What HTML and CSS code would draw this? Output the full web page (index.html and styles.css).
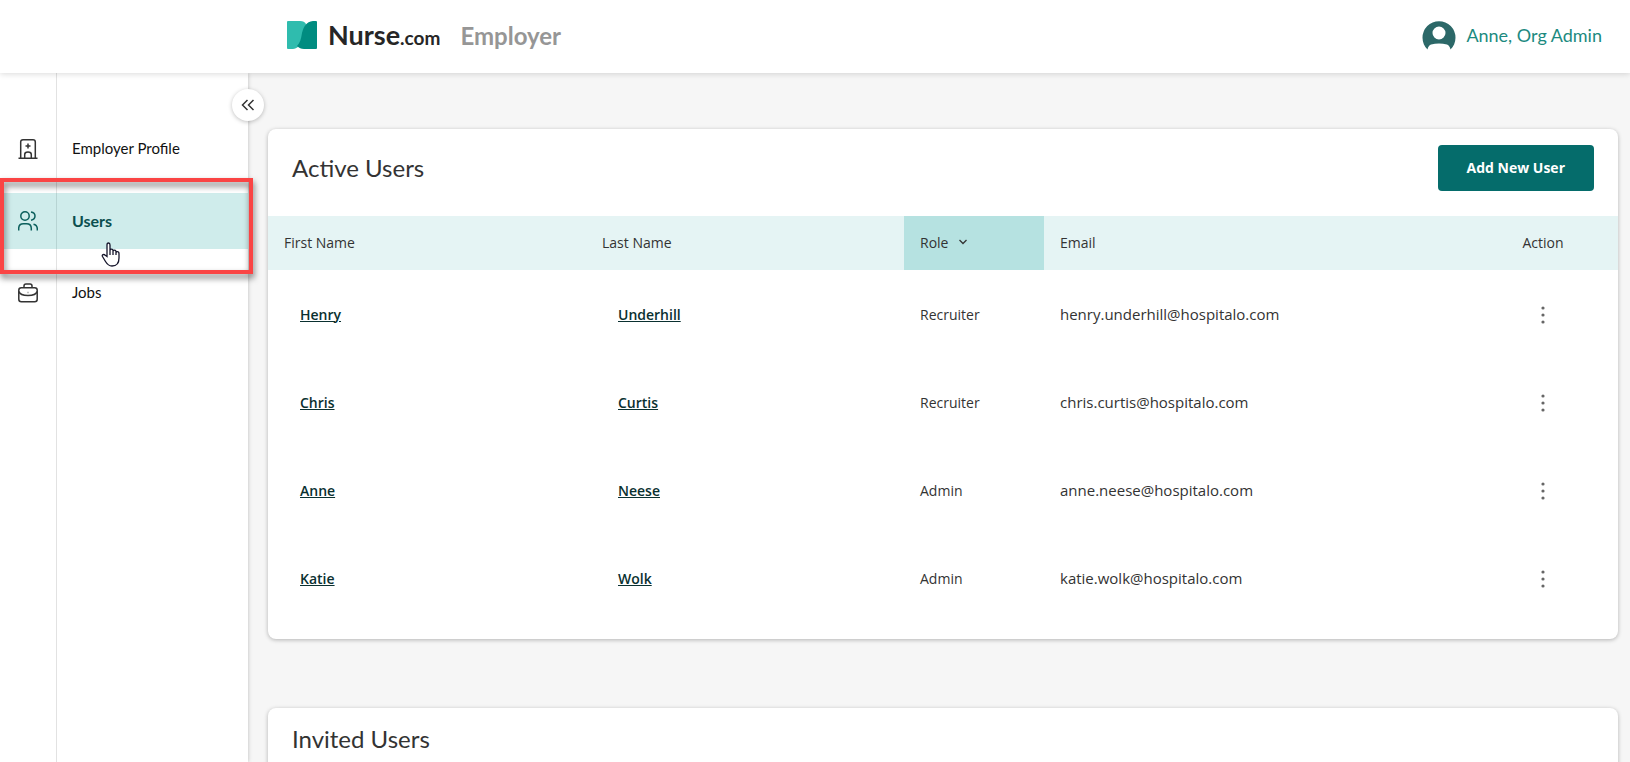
FILE: index.html
```html
<!DOCTYPE html>
<html lang="en">
<head>
  <meta charset="UTF-8" />
  <meta name="viewport" content="width=device-width, initial-scale=1.0"/>
  <title>Nurse.com Employer - Users</title>
  <link rel="stylesheet" href="styles.css">
</head>
<body>

<!-- HEADER -->
<header class="topbar">
  <a href="#" class="logo">
    <svg width="30" height="28" viewBox="0 0 30 28" aria-hidden="true">
      <path fill="#2fbcae" d="M1 0H13C16 0 18 1 19 3L14 22C12 26 9 28 4 28H1Q0 28 0 27V1Q0 0 1 0Z"/>
      <path fill="#008c80" d="M29 0H26C19 1 17 5 15 12C14 18 13 22 10 25C12 27 14 28 17 28H29Q30 28 30 27V1Q30 0 29 0Z"/>
    </svg>
    <span class="logo-name">Nurse<span class="logo-com">.com</span></span>
    <span class="logo-product">Employer</span>
  </a>
  <a href="#" class="account">
    <svg width="34" height="30" viewBox="0 0 34 30" aria-hidden="true">
      <path fill="#2c6868" fill-rule="evenodd" d="M5.500 29.500A16.500 16.500 0 1 1 28.500 29.500C28 27 27 25.500 25 24.500Q17 22.500 9 24.500C7 25.500 6 27 5.500 29.500ZM17 6.500A6.500 6.500 0 1 0 17 19.500A6.500 6.500 0 1 0 17 6.500Z"/>
    </svg>
    <span>Anne, Org Admin</span>
  </a>
</header>

<div class="layout">

  <!-- SIDEBAR -->
  <nav class="sidebar">
    <button class="collapse" aria-label="Collapse menu">
      <svg width="14" height="14" viewBox="0 0 14 14"><path d="M6.500 2L1.500 7L6.500 12M12.500 2L7.500 7L12.500 12"/></svg>
    </button>

    <a href="#" class="nav-item">
      <span class="nav-icon">
        <svg width="20" height="20" viewBox="0 0 20 20"><path d="M.5 19.300H19.500M2.700 19V3Q2.700 .8 5 .8H15Q17.300 .8 17.300 3V19M10 4.500V9.500M7.500 7H12.500M6.700 19V15.500Q6.700 13 10 13Q13.300 13 13.300 15.500V19"/></svg>
      </span>
      <span class="nav-label">Employer Profile</span>
    </a>

    <div class="nav-current">
      <a href="#" class="nav-item active">
        <span class="nav-icon">
          <svg width="20" height="20" viewBox="0 0 20 20"><circle cx="7" cy="5" r="4.200"/><path d="M.7 19.500V17.500Q.7 12.800 5.500 12.800H8.500Q13.300 12.800 13.300 17.500V19.500M13 .9Q17 1.500 17 5Q17 8.500 13 9.200M15.500 13.200Q19.300 14 19.300 18V19.500"/></svg>
        </span>
        <span class="nav-label">Users</span>
      </a>
      <div class="highlight"></div>
      <svg class="pointer" width="20" height="25" viewBox="0 0 20 25" aria-hidden="true">
        <path d="M6 14.500V3Q6 1 7.500 1Q9 1 9 3V9.500V8.500Q9 7.200 10.500 7.200Q12 7.200 12 8.700V10.500V9.500Q12 8.200 13.500 8.200Q15 8.200 15 9.700V11.500V11Q15 9.700 16.300 9.700Q18 9.700 18 11.700V16C18 21 15.500 24 11 24C7.500 24 6 22 4.500 19.500L1.500 14.500Q.8 13.200 2 12.600Q3.300 12.200 4.300 13.200ZM9 9V13M12 10V13M15 11V13"/>
      </svg>
    </div>

    <a href="#" class="nav-item">
      <span class="nav-icon">
        <svg width="20" height="20" viewBox="0 0 20 20"><rect x=".8" y="4.800" width="18.400" height="14" rx="2.500"/><path d="M6 4.800V3Q6 1 8 1H12Q14 1 14 3V4.800M1 8.500Q2 12.500 10 12.500Q18 12.500 19 8.500M9.700 9.500H10.300"/></svg>
      </span>
      <span class="nav-label">Jobs</span>
    </a>
  </nav>

  <!-- CONTENT -->
  <main class="content">
    <section class="card">
      <div class="card-head">
        <h2>Active Users</h2>
        <button class="btn">Add New User</button>
      </div>
      <table class="users">
        <colgroup>
          <col class="col-name">
          <col class="col-name">
          <col class="col-role">
          <col>
          <col class="col-action">
        </colgroup>
        <thead>
          <tr>
            <th>First Name</th>
            <th>Last Name</th>
            <th class="sorted">
              <button class="sort">Role
                <svg width="10" height="6" viewBox="0 0 10 6"><path d="M1.500 1L5 4.500L8.500 1"/></svg>
              </button>
            </th>
            <th>Email</th>
            <th class="action">Action</th>
          </tr>
        </thead>
        <tbody>
          <tr>
            <td class="name"><a href="#">Henry</a></td>
            <td class="name"><a href="#">Underhill</a></td>
            <td>Recruiter</td>
            <td class="email">henry.underhill@hospitalo.com</td>
            <td class="action"><button class="more" aria-label="Actions"><svg width="4" height="18" viewBox="0 0 4 18"><circle cx="2" cy="2" r="1.600"/><circle cx="2" cy="9" r="1.600"/><circle cx="2" cy="16" r="1.600"/></svg></button></td>
          </tr>
          <tr>
            <td class="name"><a href="#">Chris</a></td>
            <td class="name"><a href="#">Curtis</a></td>
            <td>Recruiter</td>
            <td class="email">chris.curtis@hospitalo.com</td>
            <td class="action"><button class="more" aria-label="Actions"><svg width="4" height="18" viewBox="0 0 4 18"><circle cx="2" cy="2" r="1.600"/><circle cx="2" cy="9" r="1.600"/><circle cx="2" cy="16" r="1.600"/></svg></button></td>
          </tr>
          <tr>
            <td class="name"><a href="#">Anne</a></td>
            <td class="name"><a href="#">Neese</a></td>
            <td>Admin</td>
            <td class="email">anne.neese@hospitalo.com</td>
            <td class="action"><button class="more" aria-label="Actions"><svg width="4" height="18" viewBox="0 0 4 18"><circle cx="2" cy="2" r="1.600"/><circle cx="2" cy="9" r="1.600"/><circle cx="2" cy="16" r="1.600"/></svg></button></td>
          </tr>
          <tr>
            <td class="name"><a href="#">Katie</a></td>
            <td class="name"><a href="#">Wolk</a></td>
            <td>Admin</td>
            <td class="email">katie.wolk@hospitalo.com</td>
            <td class="action"><button class="more" aria-label="Actions"><svg width="4" height="18" viewBox="0 0 4 18"><circle cx="2" cy="2" r="1.600"/><circle cx="2" cy="9" r="1.600"/><circle cx="2" cy="16" r="1.600"/></svg></button></td>
          </tr>
        </tbody>
      </table>
    </section>

    <section class="card">
      <div class="card-head">
        <h2>Invited Users</h2>
      </div>
    </section>
  </main>
</div>

</body>
</html>
```
FILE: styles.css
```css
* {
  box-sizing: border-box;
  margin: 0;
  padding: 0;
}

body {
  display: flex;
  flex-direction: column;
  height: 100vh;
  overflow: hidden;
  font-family: 'Open Sans', sans-serif;
  font-size: 14px;
  color: #333;
  background-color: #f6f6f6;
}

a {
  color: inherit;
  text-decoration: none;
}

button {
  border: none;
  background: none;
  font: inherit;
  color: inherit;
  cursor: pointer;
}

/* HEADER */
.topbar {
  display: flex;
  flex-shrink: 0;
  align-items: center;
  justify-content: space-between;
  height: 73px;
  padding: 0 28px 4px 287px;
  background-color: #fff;
  box-shadow: 0 1px 6px rgba(0, 0, 0, 0.15);
  font-family: Lato, sans-serif;
  position: relative;
  z-index: 1;
}

.logo {
  display: flex;
  align-items: center;
}

.logo svg {
  margin-right: 11px;
}

.logo-name {
  font-size: 27px;
  font-weight: 700;
  color: #262626;
}

.logo-com {
  font-size: 19px;
}

.logo-product {
  margin-left: 20px;
  padding-top: 2px;
  font-size: 24px;
  font-weight: 700;
  color: #969696;
}

.account {
  display: flex;
  align-items: center;
  gap: 10px;
  font-size: 18px;
  color: #1c8a80;
}

/* SIDEBAR */
.layout {
  display: flex;
  flex: 1;
  min-height: 0;
}

.sidebar {
  position: relative;
  display: flex;
  flex-direction: column;
  flex-shrink: 0;
  gap: 16px;
  width: 248px;
  padding-top: 48px;
  background: linear-gradient(#e2e2e2, #e2e2e2) 56px 0 / 1px 100% no-repeat #fff;
  box-shadow: 0 0 4px rgba(0, 0, 0, 0.25);
  font-family: Lato, sans-serif;
  font-size: 15px;
  color: #111;
}

.nav-item {
  display: flex;
  align-items: center;
  height: 56px;
}

.nav-icon {
  display: flex;
  justify-content: center;
  width: 56px;
}

.nav-label {
  padding: 0 0 2px 16px;
}

.sidebar svg {
  fill: none;
  stroke: #333;
  stroke-width: 1.500;
}

.nav-current {
  position: relative;
}

.active {
  background-color: rgba(0, 155, 150, 0.19);
  font-size: 16px;
  font-weight: 700;
  color: #0b4f4f;
}

.sidebar .active svg {
  stroke: #0b5f5c;
}

.highlight {
  position: absolute;
  inset: -15px -5px -25px 0;
  border: 4px solid #fa4444;
  filter: drop-shadow(1px 4px 3px rgba(0, 0, 0, 0.55));
  pointer-events: none;
}

.sidebar .pointer {
  position: absolute;
  top: 49px;
  left: 101px;
  fill: #fff;
  stroke: #15152b;
  stroke-width: 1.300;
}

.collapse {
  position: absolute;
  top: 16px;
  right: -16px;
  display: flex;
  align-items: center;
  justify-content: center;
  width: 32px;
  height: 32px;
  border-radius: 50%;
  background-color: #fff;
  box-shadow: 0 1px 4px rgba(0, 0, 0, 0.25);
}

/* CARDS */
.content {
  flex: 1;
  padding: 56px 12px 0 20px;
}

.card {
  margin-bottom: 69px;
  padding-bottom: 17px;
  border-radius: 8px;
  background-color: #fff;
  box-shadow: 0 1px 4px rgba(0, 0, 0, 0.28);
}

.card-head {
  display: flex;
  align-items: center;
  justify-content: space-between;
  padding: 16px 24px 25px;
}

.card-head h2 {
  font-family: Lato, sans-serif;
  font-size: 24px;
  font-weight: 400;
  line-height: 30px;
}

.btn {
  height: 46px;
  padding: 0 29px 2px;
  border-radius: 4px;
  background-color: #056c6b;
  color: #fff;
  font-weight: 700;
}

/* USERS TABLE */
.users {
  width: 100%;
  table-layout: fixed;
  border-collapse: collapse;
}

.col-name {
  width: 318px;
}

.col-role {
  width: 140px;
}

.col-action {
  width: 150px;
}

th {
  height: 54px;
  padding: 0 16px 2px;
  background-color: #e5f4f4;
  font-weight: 400;
  text-align: left;
}

th.sorted {
  background-color: #b6e2e1;
}

.sort {
  display: flex;
  align-items: center;
  gap: 10px;
}

.sort svg {
  fill: none;
  stroke: #333;
  stroke-width: 1.300;
}

td {
  height: 88px;
  padding: 0 16px;
}

td.name {
  padding-left: 32px;
  font-weight: 600;
  color: #0a3030;
}

td.name a {
  text-decoration: underline;
  text-decoration-thickness: 1px;
  text-underline-offset: 1px;
}

td.email {
  font-size: 15px;
}

th.action,
td.action {
  text-align: center;
}

.more {
  padding: 5px 8px 3px;
  vertical-align: middle;
}

.more svg {
  display: block;
  fill: #666;
}
```
